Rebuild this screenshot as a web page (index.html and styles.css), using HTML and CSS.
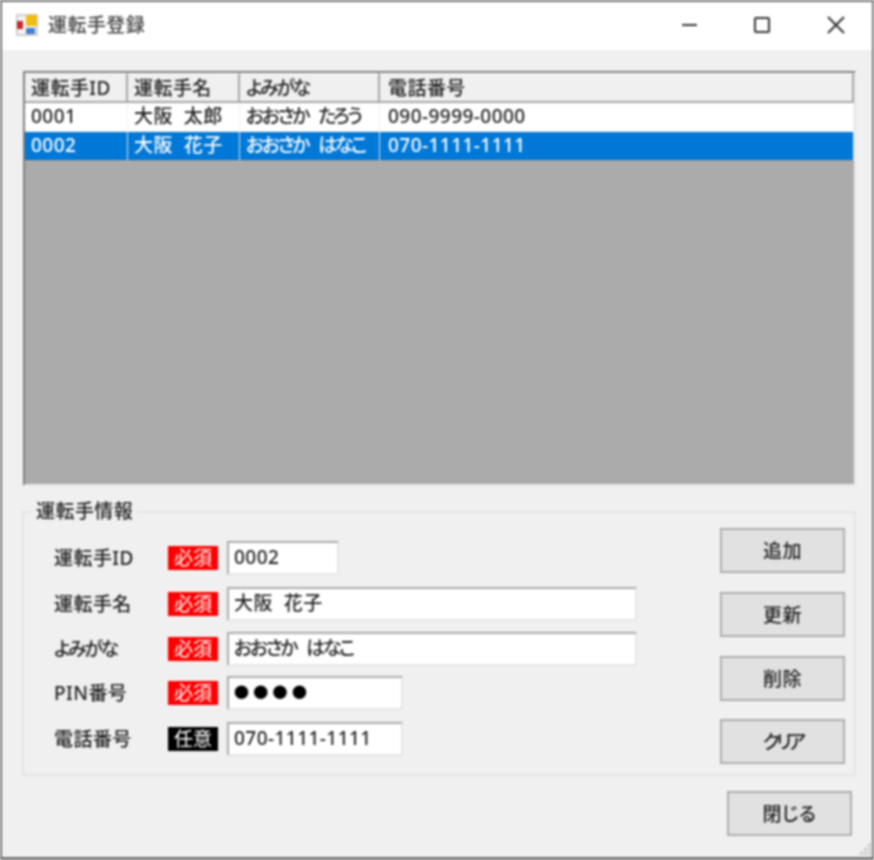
FILE: index.html
```html
<!DOCTYPE html>
<html lang="ja">
<head>
<meta charset="utf-8">
<title>運転手登録</title>
<link rel="stylesheet" href="styles.css">
</head>
<body>
<div class="window">
  <header class="titlebar">
    <svg class="app-icon" width="24" height="24" viewBox="0 0 24 24">
      <rect x="1" y="1" width="22" height="22" fill="#cfcfcf"/>
      <rect x="3" y="3" width="18" height="18" fill="#f4f4f4"/>
      <rect x="11" y="2" width="11" height="11" fill="#f0bd10"/>
      <rect x="2" y="8" width="6" height="8" fill="#c8252b"/>
      <rect x="11" y="15" width="9" height="6" fill="#3f7fd0"/>
    </svg>
    <span class="title">運転手登録</span>
    <div class="caption-buttons">
      <svg width="18" height="18" viewBox="0 0 18 18"><path d="M3 9h15" stroke="#333" stroke-width="2" fill="none"/></svg>
      <svg width="18" height="18" viewBox="0 0 18 18"><rect x="2" y="2" width="14" height="14" rx="1" stroke="#333" stroke-width="2" fill="none"/></svg>
      <svg width="18" height="18" viewBox="0 0 18 18"><path d="M1 1l16 16M17 1L1 17" stroke="#333" stroke-width="2" fill="none"/></svg>
    </div>
  </header>
  <main class="content">
    <div class="grid">
      <table class="data">
        <colgroup><col class="c1"><col class="c2"><col class="c3"><col class="c4"></colgroup>
        <thead>
          <tr><th>運転手ID</th><th>運転手名</th><th class="kana">よみがな</th><th class="wide">電話番号</th></tr>
        </thead>
        <tbody>
          <tr><td>0001</td><td>大阪&nbsp;&nbsp;太郎</td><td class="kana">おおさか&nbsp;&nbsp;&nbsp;&nbsp;たろう</td><td class="wide">090-9999-0000</td></tr>
          <tr class="selected"><td>0002</td><td>大阪&nbsp;&nbsp;花子</td><td class="kana">おおさか&nbsp;&nbsp;&nbsp;&nbsp;はなこ</td><td class="wide">070-1111-1111</td></tr>
        </tbody>
      </table>
    </div>
    <section class="group">
      <div class="legend">運転手情報</div>
      <div class="group-body">
        <div class="form">
          <div class="row">
            <span class="label">運転手ID</span><span class="badge req">必須</span>
            <div class="input w-s">0002</div>
          </div>
          <div class="row">
            <span class="label">運転手名</span><span class="badge req">必須</span>
            <div class="input w-l">大阪&nbsp;&nbsp;花子</div>
          </div>
          <div class="row">
            <span class="label kana">よみがな</span><span class="badge req">必須</span>
            <div class="input w-l kana">おおさか&nbsp;&nbsp;&nbsp;&nbsp;はなこ</div>
          </div>
          <div class="row">
            <span class="label">PIN番号</span><span class="badge req">必須</span>
            <div class="input w-m pin">●●●●</div>
          </div>
          <div class="row">
            <span class="label">電話番号</span><span class="badge opt">任意</span>
            <div class="input w-m">070-1111-1111</div>
          </div>
        </div>
        <div class="actions">
          <button class="btn">追加</button>
          <button class="btn">更新</button>
          <button class="btn">削除</button>
          <button class="btn kata">クリア</button>
        </div>
      </div>
    </section>
    <div class="footer"><button class="btn">閉じる</button></div>
  </main>
  <svg class="grip" width="14" height="14" viewBox="0 0 14 14" fill="#bdbdbd">
    <rect x="10" y="1" width="2.5" height="2.5"/>
    <rect x="6" y="5" width="2.5" height="2.5"/><rect x="10" y="5" width="2.5" height="2.5"/>
    <rect x="2" y="9" width="2.5" height="2.5"/><rect x="6" y="9" width="2.5" height="2.5"/><rect x="10" y="9" width="2.5" height="2.5"/>
  </svg>
</div>
</body>
</html>
```
FILE: styles.css
```css
* { box-sizing: border-box; }
html, body { margin: 0; padding: 0; background: #f0f0f0; }
body { width: 874px; height: 860px; overflow: hidden; }
.window {
  position: relative;
  width: 874px;
  height: 860px;
  display: flex;
  flex-direction: column;
  background: #f0f0f0;
  border: 2px solid #767676;
  border-bottom-width: 3px;
  font-family: "Noto Sans", "Noto Sans CJK JP", sans-serif;
  font-size: 19px;
  font-weight: 500;
  letter-spacing: 0.45px;
  font-feature-settings: "palt";
  line-height: 24px;
  color: #222;
  filter: blur(0.8px);
}
.titlebar {
  flex: none;
  height: 48px;
  display: flex;
  align-items: center;
  background: #fff;
  padding-left: 13px;
}
.app-icon { flex: none; margin-top: -3px; }
.title { margin-left: 9px; margin-top: -2px; color: #444; }
.caption-buttons {
  margin-left: auto;
  margin-right: 27px;
  margin-top: -3px;
  display: flex;
  gap: 56px;
}
.content {
  flex: 1;
  display: flex;
  flex-direction: column;
  padding: 21px 16px 0 21px;
}
.grid {
  flex: none;
  height: 415px;
  background: #ababab;
  border: 2px solid;
  border-color: #7f7f7f #e8e8e8 #e8e8e8 #7f7f7f;
}
.data {
  width: 100%;
  table-layout: fixed;
  border-collapse: separate;
  border-spacing: 0;
}
.c1 { width: 103px; }
.c2 { width: 112px; }
.c3 { width: 140px; }
.data th {
  height: 30px;
  padding: 0 0 0 6px;
  text-align: left;
  font-weight: 500;
  background: #f0f0f0;
  border-right: 2px solid #a6a6a6;
  border-bottom: 2px solid #a6a6a6;
  border-top: 1px solid #fff;
}
.data td {
  height: 29px;
  padding: 0 0 2px 6px;
  background: #fff;
  border-right: 1px solid #f0f0f0;
  border-bottom: 1px solid #f0f0f0;
  white-space: nowrap;
}
.data .wide { padding-left: 8px; }
.kana { letter-spacing: -2.4px; }
.selected td {
  background: #0078d7;
  color: #fff;
  border-right-color: #cfe4f7;
  border-bottom-color: #a0a0a0;
}
.group {
  flex: none;
  height: 265px;
  margin-top: 25px;
  margin-left: -1px;
  border: 2px solid #e4e4e4;
  display: flex;
  flex-direction: column;
}
.legend {
  align-self: flex-start;
  margin: -14px 0 0 8px;
  padding: 0 4px;
  background: #f0f0f0;
}
.group-body {
  flex: 1;
  display: flex;
  justify-content: space-between;
  padding: 5px 9px 0 30px;
}
.form {
  padding-top: 13px;
  display: grid;
  grid-template-rows: 46px 45px 44px 46px 34px;
  align-content: start;
}
.row {
  display: flex;
  align-items: flex-start;
}
.label {
  width: 114px;
  line-height: 34px;
}
.badge {
  width: 50px;
  height: 24px;
  margin-top: 5px;
  margin-right: 9px;
  color: #fff;
  font-weight: 400;
  letter-spacing: 0;
  line-height: 24px;
  text-align: center;
}
.req { background: #ff0000; }
.opt { background: #000; }
.input {
  height: 34px;
  padding: 0 0 2px 5px;
  background: #fff;
  border: 2px solid;
  border-color: #ababab #e6e6e6 #e6e6e6 #ababab;
  line-height: 28px;
  white-space: nowrap;
}
.w-s { width: 112px; }
.w-m { width: 176px; }
.w-l { width: 410px; }
.pin { font-size: 15px; color: #000; letter-spacing: 4.3px; font-feature-settings: normal; }
.actions {
  display: grid;
  grid-template-rows: 64px 64px 63px 45px;
  align-content: start;
}
.btn {
  width: 125px;
  height: 45px;
  padding: 0;
  background: #e1e1e1;
  border: 2px solid #adadad;
  font: inherit;
  letter-spacing: inherit;
  font-feature-settings: inherit;
  color: #222;
}
.btn.kata { letter-spacing: -3.6px; }
.footer {
  display: flex;
  justify-content: flex-end;
  margin-top: 15px;
  margin-right: 4px;
}
.grip { position: absolute; right: 0; bottom: 0; }
```
